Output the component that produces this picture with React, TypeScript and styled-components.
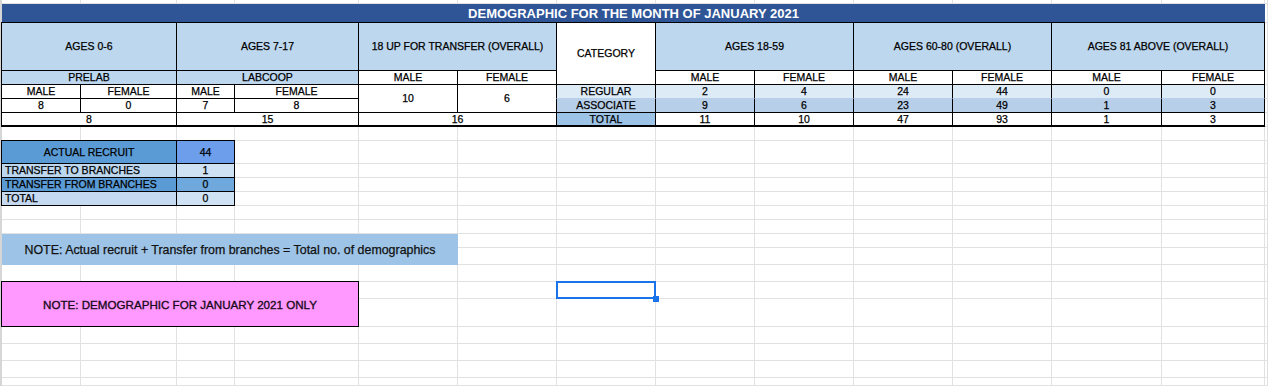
import styled, { createGlobalStyle } from "styled-components";

const GlobalStyle = createGlobalStyle`
  html, body {
    margin: 0;
    padding: 0;
    background: #fff;
    overflow: hidden;
  }
  body {
    font-family: "Liberation Sans", Arial, sans-serif;
    color: #000;
  }
`;

const COLS = [79, 96, 58, 124, 99, 99, 99, 99, 99, 99, 99, 110, 103, 3];
const ROWS = [4, 19, 48, 14, 14, 14, 14, 14, 23, 14, 14, 14, 14, 14, 14, 17, 17, 17, 28, 17, 17, 17, 8];

const LIGHT = "#bdd7ee";
const REGULAR = "#ddebf7";
const ASSOC = "#b8cfe9";

const Sheet = styled.div`
  display: grid;
  grid-template-columns: ${COLS.map((w) => `${w}px`).join(" ")};
  grid-template-rows: ${ROWS.map((h) => `${h}px`).join(" ")};
  width: max-content;
  border-left: 2px solid #d6d6d6;
`;

const Blank = styled.div`
  border-right: 1px solid #e1e1e1;
  border-bottom: 1px solid #e1e1e1;
`;

interface IPlace {
  $r: number;
  $c: number;
  $rs?: number;
  $cs?: number;
}

const place = (p: IPlace) => `
  grid-row: ${p.$r + 1} / span ${p.$rs ?? 1};
  grid-column: ${p.$c + 1} / span ${p.$cs ?? 1};
`;

const Cell = styled.div<IPlace & { $bg?: string; $left?: boolean; $thick?: boolean; $soft?: boolean }>`
  ${place}
  margin: -1px 0 0 -1px;
  border: 1px solid #000;
  border-bottom-width: ${(p) => (p.$thick ? 2 : 1)}px;
  border-top-color: ${(p) => (p.$soft ? "transparent" : "#000")};
  background: ${(p) => p.$bg ?? "#fff"};
  display: flex;
  align-items: center;
  justify-content: ${(p) => (p.$left ? "flex-start" : "center")};
  padding: 0 3px;
  font-size: 10.5px;
  line-height: 1;
  -webkit-text-stroke: 0.25px #000;
  white-space: nowrap;
  overflow: hidden;
`;

const TitleBar = styled.div<IPlace>`
  ${place}
  background: #2f5597;
  color: #fff;
  font-size: 13px;
  font-weight: 700;
  display: flex;
  align-items: center;
  justify-content: center;
`;

const FormulaNote = styled.div<IPlace>`
  ${place}
  background: #9dc3e6;
  display: flex;
  align-items: center;
  justify-content: center;
  font-size: 12.4px;
  color: #111;
  -webkit-text-stroke: 0.25px #111;
`;

const PinkNote = styled.div<IPlace>`
  ${place}
  margin: -1px 0 0 -1px;
  border: 1px solid #000;
  background: #ff99ff;
  display: flex;
  align-items: center;
  justify-content: center;
  font-size: 11.6px;
  color: #1a0a1a;
  -webkit-text-stroke: 0.35px #1a0a1a;
`;

const Selected = styled.div<IPlace>`
  ${place}
  position: relative;
  border-right: 1px solid #e1e1e1;
  border-bottom: 1px solid #e1e1e1;

  &::before {
    content: "";
    position: absolute;
    left: -1px;
    top: -1px;
    right: -1px;
    bottom: -1px;
    border: 2px solid #1a73e8;
  }

  &::after {
    content: "";
    position: absolute;
    right: -4px;
    bottom: -4px;
    width: 6px;
    height: 6px;
    background: #1a73e8;
  }
`;

interface ISpec {
  r: number;
  c: number;
  rs?: number;
  cs?: number;
  t: string;
  bg?: string;
  left?: boolean;
  thick?: boolean;
  soft?: boolean;
}

const sexes = ["MALE", "FEMALE", "MALE", "FEMALE", "MALE", "FEMALE"];

const specs: ISpec[] = [
  { r: 2, c: 0, cs: 2, t: "AGES 0-6", bg: LIGHT },
  { r: 2, c: 2, cs: 2, t: "AGES 7-17", bg: LIGHT },
  { r: 2, c: 4, cs: 2, t: "18 UP FOR TRANSFER (OVERALL)", bg: LIGHT },
  { r: 2, c: 6, rs: 2, t: "CATEGORY" },
  { r: 2, c: 7, cs: 2, t: "AGES 18-59", bg: LIGHT },
  { r: 2, c: 9, cs: 2, t: "AGES 60-80 (OVERALL)", bg: LIGHT },
  { r: 2, c: 11, cs: 2, t: "AGES 81 ABOVE (OVERALL)", bg: LIGHT },

  { r: 3, c: 0, cs: 2, t: "PRELAB", bg: LIGHT },
  { r: 3, c: 2, cs: 2, t: "LABCOOP", bg: LIGHT },
  { r: 3, c: 4, t: "MALE" },
  { r: 3, c: 5, t: "FEMALE" },
  ...sexes.map((t, i) => ({ r: 3, c: 7 + i, t })),

  ...["MALE", "FEMALE", "MALE", "FEMALE"].map((t, i) => ({ r: 4, c: i, t })),
  { r: 4, c: 4, rs: 2, t: "10" },
  { r: 4, c: 5, rs: 2, t: "6" },
  { r: 4, c: 6, t: "REGULAR", bg: REGULAR },
  ...["2", "4", "24", "44", "0", "0"].map((t, i) => ({ r: 4, c: 7 + i, t, bg: REGULAR })),

  ...["8", "0", "7", "8"].map((t, i) => ({ r: 5, c: i, t })),
  { r: 5, c: 6, t: "ASSOCIATE", bg: ASSOC, soft: true },
  ...["9", "6", "23", "49", "1", "3"].map((t, i) => ({ r: 5, c: 7 + i, t, bg: ASSOC, soft: true })),

  { r: 6, c: 0, cs: 2, t: "8", thick: true },
  { r: 6, c: 2, cs: 2, t: "15", thick: true },
  { r: 6, c: 4, cs: 2, t: "16", thick: true },
  { r: 6, c: 6, t: "TOTAL", bg: "#9dc3e6", thick: true },
  ...["11", "10", "47", "93", "1", "3"].map((t, i) => ({ r: 6, c: 7 + i, t, thick: true })),

  { r: 8, c: 0, cs: 2, t: "ACTUAL RECRUIT", bg: "#5b9bd5" },
  { r: 8, c: 2, t: "44", bg: "#6d9eeb" },
  { r: 9, c: 0, cs: 2, t: "TRANSFER TO BRANCHES", bg: LIGHT, left: true },
  { r: 9, c: 2, t: "1", bg: "#cfe2f3" },
  { r: 10, c: 0, cs: 2, t: "TRANSFER FROM BRANCHES", bg: "#5b9bd5", left: true },
  { r: 10, c: 2, t: "0", bg: "#6fa8dc" },
  { r: 11, c: 0, cs: 2, t: "TOTAL", bg: "#c5d9f1", left: true },
  { r: 11, c: 2, t: "0", bg: "#cfe2f3" },
];

const title = { r: 1, c: 0, cs: 13 };
const formula = { r: 14, c: 0, rs: 2, cs: 5 };
const pink = { r: 17, c: 0, rs: 2, cs: 4 };
const selected = { r: 17, c: 6 };

function countBlanks() {
  const taken = ROWS.map(() => COLS.map(() => false));
  const mark = (s: { r: number; c: number; rs?: number; cs?: number }) => {
    for (let r = s.r; r < s.r + (s.rs ?? 1); r++) {
      for (let c = s.c; c < s.c + (s.cs ?? 1); c++) {
        taken[r][c] = true;
      }
    }
  };
  [...specs, title, formula, pink, selected].forEach(mark);
  return taken.flat().filter((v) => !v).length;
}

function App() {
  const blanks = countBlanks();
  return (
    <>
      <GlobalStyle />
      <Sheet>
        {Array.from({ length: blanks }, (_, i) => (
          <Blank key={`b${i}`} />
        ))}
        <TitleBar $r={title.r} $c={title.c} $cs={title.cs}>
          DEMOGRAPHIC FOR THE MONTH OF JANUARY 2021
        </TitleBar>
        {specs.map((s) => (
          <Cell
            key={`${s.r}-${s.c}`}
            $r={s.r}
            $c={s.c}
            $rs={s.rs}
            $cs={s.cs}
            $bg={s.bg}
            $left={s.left}
            $thick={s.thick}
            $soft={s.soft}
          >
            {s.t}
          </Cell>
        ))}
        <FormulaNote $r={formula.r} $c={formula.c} $rs={formula.rs} $cs={formula.cs}>
          NOTE: Actual recruit + Transfer from branches = Total no. of demographics
        </FormulaNote>
        <PinkNote $r={pink.r} $c={pink.c} $rs={pink.rs} $cs={pink.cs}>
          NOTE: DEMOGRAPHIC FOR JANUARY 2021 ONLY
        </PinkNote>
        <Selected $r={selected.r} $c={selected.c} />
      </Sheet>
    </>
  );
}

export default App;
